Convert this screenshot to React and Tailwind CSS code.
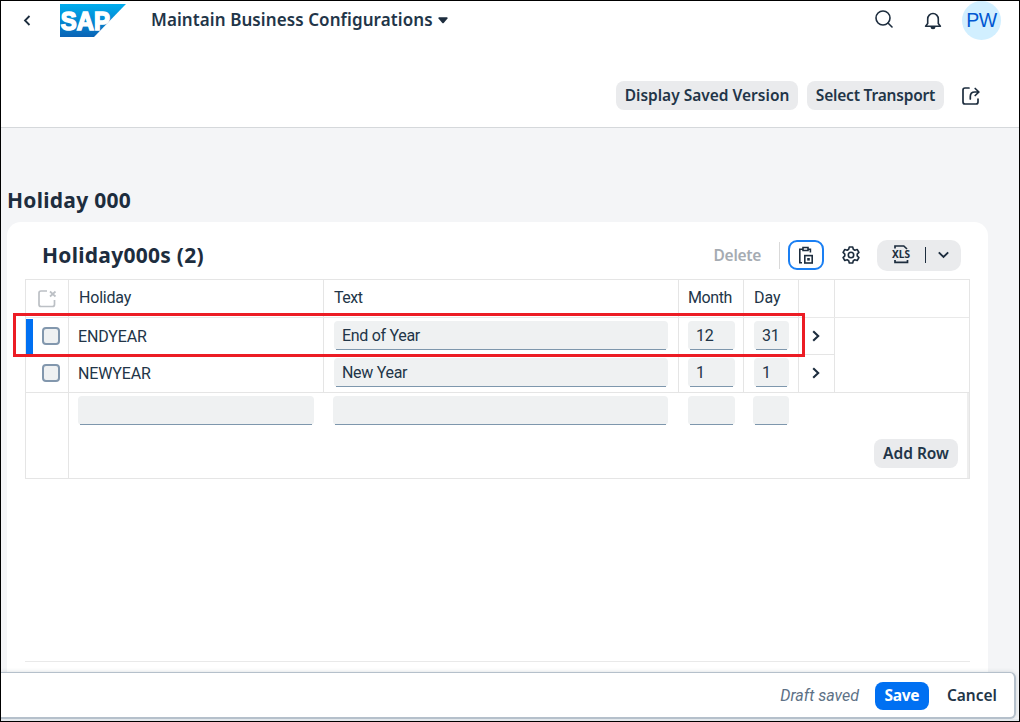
import React from "react";

const GRID = "grid grid-cols-[43px_255px_355px_65px_55px_36px_135px]";
const CELL = "border-r border-[#e5e5e5]";

function Field({ value, className = "" }) {
  return (
    <div className={`relative flex h-[29px] items-center rounded-[4px] bg-[#eff1f2] pl-2 ${className}`}>
      <span className="font-['Roboto',sans-serif] text-[16px] leading-5 tracking-[-0.3px] text-[#223548]">{value}</span>
      <span className="absolute inset-x-[2px] bottom-0 h-px bg-[#7e97ad]" />
    </div>
  );
}

function Checkbox() {
  return <span className="mb-px ml-[16px] block h-[18px] w-[18px] rounded-[4px] border-2 border-[#8297ad] bg-[#eff1f2]" />;
}

function Chevron() {
  return (
    <svg width="8" height="12" viewBox="0 0 8 12" fill="none" stroke="#1d2d3e" strokeWidth="2.1">
      <path d="M1.2 1.2 6.2 6 1.2 10.8" />
    </svg>
  );
}

function Row({ name, text, month, day, selected }) {
  return (
    <div className={`${GRID} h-[37px]`}>
      <div className={`${CELL} flex items-center`}>
        {selected && <span className="-mr-[7px] h-[36px] w-[7px] bg-[#0070f2]" />}
        <Checkbox />
      </div>
      <div className={`${CELL} flex items-center pl-[9px]`}>
        <span className="font-['Roboto',sans-serif] text-[16px] tracking-[-0.15px] text-[#223548]">{name}</span>
      </div>
      <div className={`${CELL} pl-[10px] pr-[10px] pt-[3px]`}><Field value={text} /></div>
      <div className={`${CELL} pl-[9px] pr-[8px] pt-[3px]`}><Field value={month} /></div>
      <div className={`${CELL} pl-[10px] pr-[9px] pt-[3px]`}><Field value={day} /></div>
      <div className={`${CELL} flex items-center pb-px pl-[13px] ${selected ? "border-b" : ""}`}><Chevron /></div>
      <div />
    </div>
  );
}

function Header() {
  return (
    <header className="h-[127px] shrink-0 border-b border-[#d5d8db] bg-white">
      <div className="flex h-[38px] items-center">
        <svg className="ml-[22px]" width="8" height="11" viewBox="0 0 8 11" fill="none" stroke="#1d2d3e" strokeWidth="1.8">
          <path d="M6.5 1 2 5.5 6.5 10" />
        </svg>
        <svg className="ml-[29px]" width="66" height="33" viewBox="0 0 66 33">
          <defs>
            <linearGradient id="brand" x1="0" y1="0" x2="0" y2="1">
              <stop offset="0" stopColor="#00aeef" />
              <stop offset="1" stopColor="#0a63b5" />
            </linearGradient>
          </defs>
          <path d="M0 0H66L34 33H0Z" fill="url(#brand)" />
          <text x="0.8" y="26" textLength="49" lengthAdjust="spacingAndGlyphs" fontFamily="Liberation Sans, sans-serif" fontWeight="700" fontSize="26" fill="#fff" stroke="#fff" strokeWidth="1.6">SAP</text>
        </svg>
        <h1 className="ml-[25px] w-[284px] whitespace-nowrap font-['Noto_Sans',sans-serif] text-[17px] font-semibold tracking-[0.09px] text-[#223548]">Maintain Business Configurations</h1>
        <svg className="ml-[3px]" width="10" height="7" viewBox="0 0 10 7" fill="#1d2d3e">
          <path d="M1 .3h8q1 .3.5 1.2L5.7 6q-.7.6-1.4 0L.5 1.5Q0 .6 1 .3Z" />
        </svg>
        <div className="ml-auto flex items-center pr-[18px]">
          <svg className="-mt-[2px]" width="18" height="18" viewBox="0 0 18 18" fill="none" stroke="#1d2d3e" strokeWidth="1.6" strokeLinecap="round">
            <circle cx="8" cy="8" r="7" />
            <path d="m13 13 4 4" />
          </svg>
          <svg className="ml-[31px] mt-[2px]" width="18" height="18" viewBox="0 0 18 18" fill="none" stroke="#1d2d3e" strokeWidth="1.6" strokeLinejoin="round">
            <path d="M3.700 7a5.300 5.500 0 0 1 10.600 0v4.500l2.100 2.700H1.600l2.100-2.700Z" />
            <path d="M6.500 15a2.500 2.300 0 0 0 5 0Z" fill="#1d2d3e" stroke="none" />
          </svg>
          <span className="ml-5 flex h-[39px] w-[39px] items-center justify-center rounded-full bg-[#d1efff] pt-[2px] font-['Liberation_Sans',sans-serif] text-[19.5px] tracking-[-0.4px] text-[#0057d2]">PW</span>
        </div>
      </div>
      <div className="mt-[42px] flex items-center justify-end gap-[9px] pr-[38px] font-['Noto_Sans',sans-serif] text-[15.5px] font-semibold text-[#223548]">
        <button className="h-[29px] w-[182px] whitespace-nowrap rounded-[8px] bg-[#eaebed]">Display Saved Version</button>
        <button className="h-[29px] w-[137px] whitespace-nowrap rounded-[8px] bg-[#eaebed] tracking-[-0.2px]">Select Transport</button>
        <svg className="ml-[9px]" width="19" height="18" viewBox="0 0 19 18" fill="none" stroke="#1d2d3e" strokeWidth="1.7" strokeLinecap="round" strokeLinejoin="round">
          <path d="M7 1H3Q1 1 1 3v12q0 2 2 2h11q2 0 2-2v-3" />
          <path d="M8.300 12v-2.500q0-4.500 4.500-4.500h4M13.200 1.500 16.900 5l-3.700 3.500" />
        </svg>
      </div>
    </header>
  );
}

function Toolbar() {
  return (
    <div className="flex h-[57px] items-center pl-[35px] pr-[27px] pt-[9px]">
      <h3 className="whitespace-nowrap pt-px font-['Noto_Sans',sans-serif] text-[21px] font-bold tracking-[0.27px] text-[#1d2d3e]">Holiday000s (2)</h3>
      <span className="ml-auto pt-px font-['Noto_Sans',sans-serif] text-[15.5px] font-semibold tracking-[-0.3px] text-[#a5abb2]">Delete</span>
      <span className="ml-[18px] h-[27px] w-px bg-[#d9d9d9]" />
      <button className="ml-[8px] flex h-[30px] w-[36px] items-center justify-center rounded-[9px] border-2 border-[#1a7ff3]">
        <svg className="mt-px shrink-0" width="16" height="19" viewBox="0 0 16 19" fill="none" stroke="#1d2d3e" strokeWidth="1.6">
          <path d="M5 3.200H1.800V16.800H4M5 1.500H10V4.500H5ZM10 3.200h2.400V6.500" />
          <rect x="6.800" y="9.600" width="7.400" height="7.400" />
          <rect x="9.200" y="12" width="2.600" height="2.600" fill="#1d2d3e" stroke="none" />
        </svg>
      </button>
      <svg className="ml-[18px]" width="18" height="18" viewBox="0 0 18 18" fill="none" stroke="#1d2d3e" strokeWidth="1.6" strokeLinejoin="round">
        <path d="M7.300 1h3.400l.6 2.300 1.500.9 2.400-.7 1.700 2.900-1.700 1.700v1.800l1.700 1.700-1.700 2.900-2.400-.7-1.500.9-.6 2.300H7.300l-.6-2.300-1.500-.9-2.400.7-1.700-2.900 1.700-1.700V8.100L1.100 6.400l1.700-2.900 2.400.7 1.500-.9Z" />
        <circle cx="9" cy="9" r="2.700" />
      </svg>
      <div className="ml-[17px] flex h-[31px] w-[84px] items-center rounded-[10px] bg-[#eaebed] pl-[14px]">
        <svg className="mb-[2px]" width="20" height="20" viewBox="0 0 20 20">
          <path d="M4 4.500V2h8.800L16 5M4 16v2.300h12.500V16" fill="none" stroke="#1d2d3e" strokeWidth="1.700" />
          <text x="1" y="14" textLength="18" lengthAdjust="spacingAndGlyphs" fontFamily="Noto Sans, sans-serif" fontSize="11" fontWeight="700" fill="#1d2d3e">XLS</text>
        </svg>
        <span className="ml-[14px] h-[16px] w-px bg-[#1d2d3e]" />
        <svg className="mb-px ml-[12px]" width="11" height="8" viewBox="0 0 11 8" fill="none" stroke="#1d2d3e" strokeWidth="1.900">
          <path d="m.8 1.300 4.700 4.700 4.700-4.700" />
        </svg>
      </div>
    </div>
  );
}

function HolidayTable() {
  return (
    <div className="relative ml-[18px] w-[945px] border border-[#e5e5e5]">
      <div className={`${GRID} h-[38px] border-b border-[#e9e9e9] font-['Roboto',sans-serif] text-[16px] leading-[36px] text-[#223548]`}>
        <div className={`${CELL} flex items-center pl-[12px]`}>
          <svg width="19" height="18" viewBox="0 0 19 18" fill="none" stroke="#bcc0c5" strokeWidth="1.700">
            <path d="M9 1H3Q1 1 1 3v11.500q0 2 2 2h11.500q2 0 2-2V10M12 1.500l5.500 5M17.500 1.500l-5.500 5" />
          </svg>
        </div>
        <div className={`${CELL} pl-[10px] tracking-[-0.2px]`}>Holiday</div>
        <div className={`${CELL} pl-[10px] tracking-[-0.5px]`}>Text</div>
        <div className={`${CELL} pl-[9px] tracking-[-0.4px]`}>Month</div>
        <div className={`${CELL} pl-[10px]`}>Day</div>
        <div className={CELL} />
        <div />
      </div>
      <Row name="ENDYEAR" text="End of Year" month="12" day="31" selected />
      <Row name="NEWYEAR" text="New Year" month="1" day="1" />
      <div className="flex h-[86px] border-t border-[#e5e5e5]">
        <div className={`${CELL} w-[43px]`} />
        <div className="flex-1 border-r-2 border-[#eeeeee]">
          <div className="flex pl-[9px] pt-[3px]">
            <Field className="w-[236px]" />
            <Field className="ml-[19px] w-[335px]" />
            <Field className="ml-[20px] w-[47px]" />
            <Field className="ml-[18px] w-[36px]" />
          </div>
          <div className="mt-[14px] flex justify-end pr-[9px]">
            <button className="h-[29px] w-[84px] whitespace-nowrap rounded-[8px] bg-[#eaebed] font-['Noto_Sans',sans-serif] text-[15.5px] font-semibold text-[#223548]">Add Row</button>
          </div>
        </div>
      </div>
      <div className="pointer-events-none absolute left-[-13px] top-[33px] h-[44px] w-[792px] border-[3px] border-[#ec1c24]" />
    </div>
  );
}

function Footer() {
  return (
    <footer className="mr-[3px] flex h-[47px] shrink-0 items-center justify-end rounded-r-[6px] border-b-2 border-r-2 border-t border-[#b5c0cb] bg-white pr-[17px] pt-px font-['Noto_Sans',sans-serif] text-[15.5px] font-semibold text-[#223548] shadow-[0_0_4px_rgba(34,53,72,0.18)]">
      <span className="font-['Roboto',sans-serif] text-[16px] font-normal italic text-[#5d7186]">Draft saved</span>
      <button className="ml-[16px] h-[28px] w-[54px] rounded-[8px] bg-[#0070f2] font-bold tracking-[-0.3px] text-white">Save</button>
      <button className="ml-[18px]">Cancel</button>
    </footer>
  );
}

export default function App() {
  return (
    <div className="flex h-[722px] w-[1020px] flex-col overflow-hidden border border-black bg-[#f4f5f7]">
      <Header />
      <main className="flex min-h-0 flex-1 flex-col pl-[6px]">
        <h2 className="mt-[57px] whitespace-nowrap font-['Noto_Sans',sans-serif] text-[21px] font-bold leading-[30px] tracking-[0.27px] text-[#1d2d3e]">Holiday 000</h2>
        <section className="mt-[7px] flex w-[981px] flex-1 flex-col rounded-t-[14px] bg-white">
          <Toolbar />
          <HolidayTable />
          <div className="mb-[10px] ml-[18px] mt-auto h-px w-[945px] bg-[#e9e9e9]" />
        </section>
      </main>
      <Footer />
      <div className="h-[2px] shrink-0 bg-[#e3e8ec]" />
    </div>
  );
}
